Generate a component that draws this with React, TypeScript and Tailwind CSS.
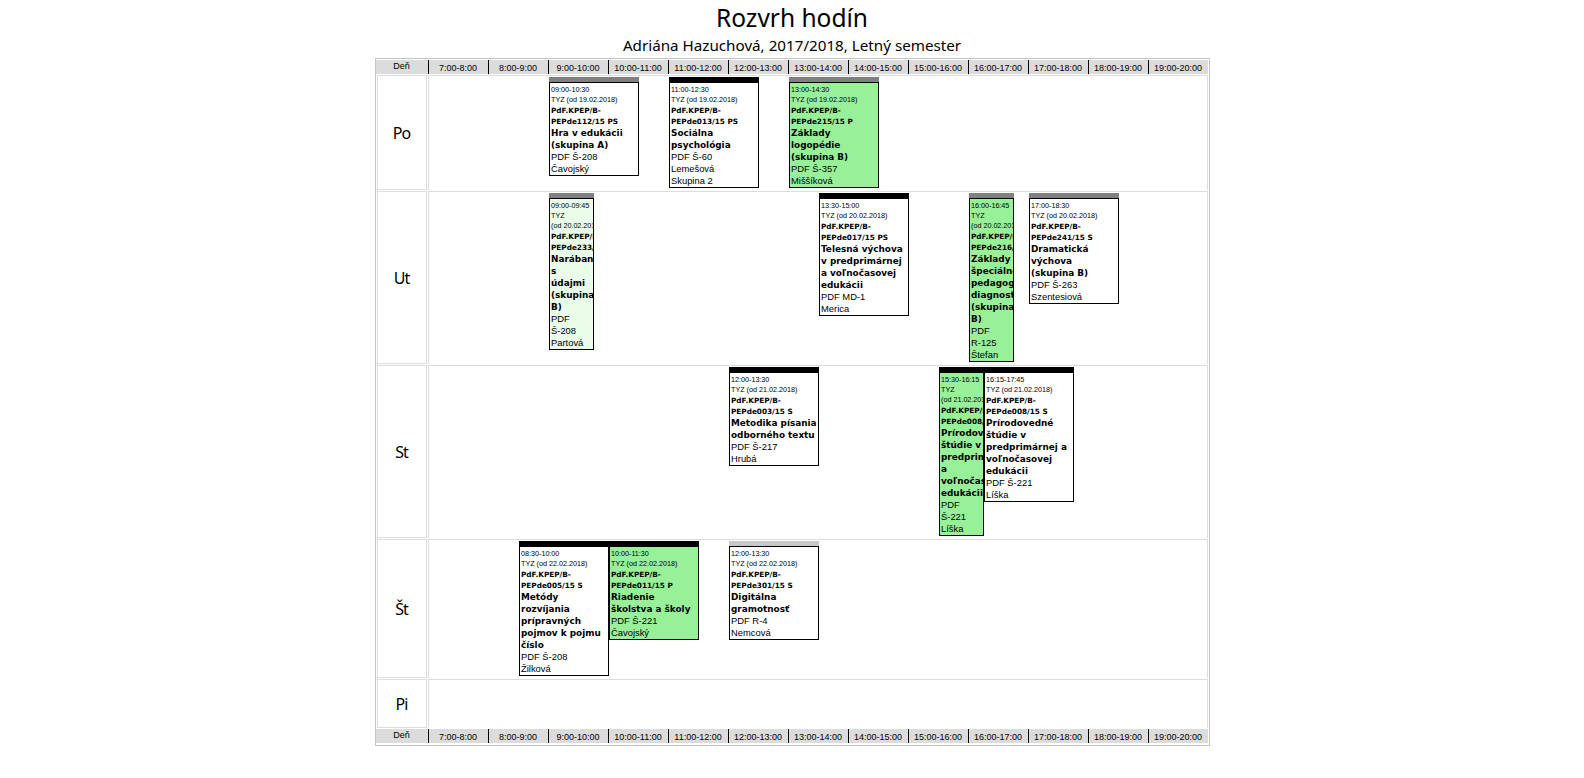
const HOURS = [
  '7:00-8:00', '8:00-9:00', '9:00-10:00', '10:00-11:00', '11:00-12:00', '12:00-13:00', '13:00-14:00',
  '14:00-15:00', '15:00-16:00', '16:00-17:00', '17:00-18:00', '18:00-19:00', '19:00-20:00',
];

interface Lesson {
  pos: string;
  bar: string;
  bg: string;
  time: string;
  tyz: string[];
  code: string;
  title: string[];
  info: string[];
}

const WHITE = 'bg-white';
const GREEN = 'bg-[#98f098]';
const PALE = 'bg-[#e9fde9]';

const DAYS: { name: string; height: string; lessons: Lesson[] }[] = [
  {
    name: 'Po',
    height: 'h-[115px]',
    lessons: [
      { pos: 'col-start-[9] col-span-6', bar: 'bg-[#808080]', bg: WHITE, time: '09:00-10:30', tyz: ['TYZ (od 19.02.2018)'], code: 'PEPde112/15 PS', title: ['Hra v edukácii', '(skupina A)'], info: ['PDF Š-208', 'Čavojský'] },
      { pos: 'col-start-[17] col-span-6', bar: 'bg-black', bg: WHITE, time: '11:00-12:30', tyz: ['TYZ (od 19.02.2018)'], code: 'PEPde013/15 PS', title: ['Sociálna', 'psychológia'], info: ['PDF Š-60', 'Lemešová', 'Skupina 2'] },
      { pos: 'col-start-[25] col-span-6', bar: 'bg-[#808080]', bg: GREEN, time: '13:00-14:30', tyz: ['TYZ (od 19.02.2018)'], code: 'PEPde215/15 P', title: ['Základy', 'logopédie', '(skupina B)'], info: ['PDF Š-357', 'Miššíková'] },
    ],
  },
  {
    name: 'Ut',
    height: 'h-[173px]',
    lessons: [
      { pos: 'col-start-[9] col-span-3', bar: 'bg-[#808080]', bg: PALE, time: '09:00-09:45', tyz: ['TYZ', '(od 20.02.2018)'], code: 'PEPde233/15 S', title: ['Narábanie', 's', 'údajmi', '(skupina', 'B)'], info: ['PDF', 'Š-208', 'Partová'] },
      { pos: 'col-start-[27] col-span-6', bar: 'bg-black', bg: WHITE, time: '13:30-15:00', tyz: ['TYZ (od 20.02.2018)'], code: 'PEPde017/15 PS', title: ['Telesná výchova', 'v predprimárnej', 'a voľnočasovej', 'edukácii'], info: ['PDF MD-1', 'Merica'] },
      { pos: 'col-start-[37] col-span-3', bar: 'bg-[#808080]', bg: GREEN, time: '16:00-16:45', tyz: ['TYZ', '(od 20.02.2018)'], code: 'PEPde216/15 P', title: ['Základy', 'špeciálnej', 'pedagogickej', 'diagnostiky', '(skupina', 'B)'], info: ['PDF', 'R-125', 'Štefan'] },
      { pos: 'col-start-[41] col-span-6', bar: 'bg-[#808080]', bg: WHITE, time: '17:00-18:30', tyz: ['TYZ (od 20.02.2018)'], code: 'PEPde241/15 S', title: ['Dramatická', 'výchova', '(skupina B)'], info: ['PDF Š-263', 'Szentesiová'] },
    ],
  },
  {
    name: 'St',
    height: 'h-[173px]',
    lessons: [
      { pos: 'col-start-[21] col-span-6', bar: 'bg-black', bg: WHITE, time: '12:00-13:30', tyz: ['TYZ (od 21.02.2018)'], code: 'PEPde003/15 S', title: ['Metodika písania', 'odborného textu'], info: ['PDF Š-217', 'Hrubá'] },
      { pos: 'col-start-[35] col-span-3', bar: 'bg-black', bg: GREEN, time: '15:30-16:15', tyz: ['TYZ', '(od 21.02.2018)'], code: 'PEPde008/15 S', title: ['Prírodovedné', 'štúdie v', 'predprimárnej', 'a', 'voľnočasovej', 'edukácii'], info: ['PDF', 'Š-221', 'Líška'] },
      { pos: 'col-start-[38] col-span-6', bar: 'bg-black', bg: WHITE, time: '16:15-17:45', tyz: ['TYZ (od 21.02.2018)'], code: 'PEPde008/15 S', title: ['Prírodovedné', 'štúdie v', 'predprimárnej a', 'voľnočasovej', 'edukácii'], info: ['PDF Š-221', 'Líška'] },
    ],
  },
  {
    name: 'Št',
    height: 'h-[139px]',
    lessons: [
      { pos: 'col-start-[7] col-span-6', bar: 'bg-black', bg: WHITE, time: '08:30-10:00', tyz: ['TYZ (od 22.02.2018)'], code: 'PEPde005/15 S', title: ['Metódy', 'rozvíjania', 'prípravných', 'pojmov k pojmu', 'číslo'], info: ['PDF Š-208', 'Žilková'] },
      { pos: 'col-start-[13] col-span-6', bar: 'bg-black', bg: GREEN, time: '10:00-11:30', tyz: ['TYZ (od 22.02.2018)'], code: 'PEPde011/15 P', title: ['Riadenie', 'školstva a školy'], info: ['PDF Š-221', 'Čavojský'] },
      { pos: 'col-start-[21] col-span-6', bar: 'bg-[#c8c8c8]', bg: WHITE, time: '12:00-13:30', tyz: ['TYZ (od 22.02.2018)'], code: 'PEPde301/15 S', title: ['Digitálna', 'gramotnosť'], info: ['PDF R-4', 'Nemcová'] },
    ],
  },
  { name: 'Pi', height: 'h-[49px]', lessons: [] },
];

function HeaderRow() {
  return (
    <div className="flex h-[14px] bg-[#dcdcdc] text-[9px]">
      <div className="w-[52px] text-center leading-[13px]">Deň</div>
      {HOURS.map((hour) => (
        <div key={hour} className="w-[60px] border-l border-black text-center leading-[17px]">
          {hour}
        </div>
      ))}
    </div>
  );
}

function LessonBox({ lesson }: { lesson: Lesson }) {
  return (
    <div className={`${lesson.pos} row-start-1 min-w-0`}>
      <div className={`h-[5px] ${lesson.bar}`} />
      <div className={`overflow-hidden whitespace-nowrap border border-black pl-[1.5px] pt-[2px] ${lesson.bg}`}>
        <div className="text-[7.2px] leading-[10px]">{lesson.time}</div>
        {lesson.tyz.map((line) => (
          <div key={line} className="text-[7.2px] leading-[10px]">{line}</div>
        ))}
        <div className="text-[7.3px] font-bold leading-[11px] [font-family:'DejaVu_Sans',Verdana,sans-serif]">PdF.KPEP/B-</div>
        <div className="text-[7.3px] font-bold leading-[11px] [font-family:'DejaVu_Sans',Verdana,sans-serif]">{lesson.code}</div>
        {lesson.title.map((line) => (
          <div key={line} className="text-[8.9px] font-bold leading-[12px] [font-family:'DejaVu_Sans',Verdana,sans-serif]">{line}</div>
        ))}
        {lesson.info.map((line) => (
          <div key={line} className="text-[9.4px] leading-[12px]">{line}</div>
        ))}
      </div>
    </div>
  );
}

export default function App() {
  return (
    <div className="flex min-h-[778px] flex-col items-center bg-white text-black [font-family:'Liberation_Sans',Arial,sans-serif]">
      <h1 className="h-[36px] text-[24.5px] leading-[36px] [font-family:'Noto_Sans',sans-serif]">Rozvrh hodín</h1>
      <h2 className="h-[22px] text-[15.2px] leading-[19px] [font-family:'Noto_Sans',sans-serif]">Adriána Hazuchová, 2017/2018, Letný semester</h2>
      <div className="flex w-[835px] flex-col gap-px border border-[#c4c4c4] pt-px pb-[2px] pr-px">
        <HeaderRow />
        {DAYS.map((day) => (
          <div key={day.name} className={`ml-px flex gap-px ${day.height}`}>
            <div className="flex w-[50px] shrink-0 items-center justify-center border border-[#dddddd] text-[16px] tracking-[-1px] [font-family:'Noto_Sans',sans-serif]">
              {day.name}
            </div>
            <div className="grid min-w-0 flex-1 grid-cols-[repeat(52,15px)] items-start border-x border-t border-[#dddddd] pt-px">
              {day.lessons.map((lesson) => (
                <LessonBox key={lesson.time} lesson={lesson} />
              ))}
            </div>
          </div>
        ))}
        <HeaderRow />
      </div>
    </div>
  );
}
